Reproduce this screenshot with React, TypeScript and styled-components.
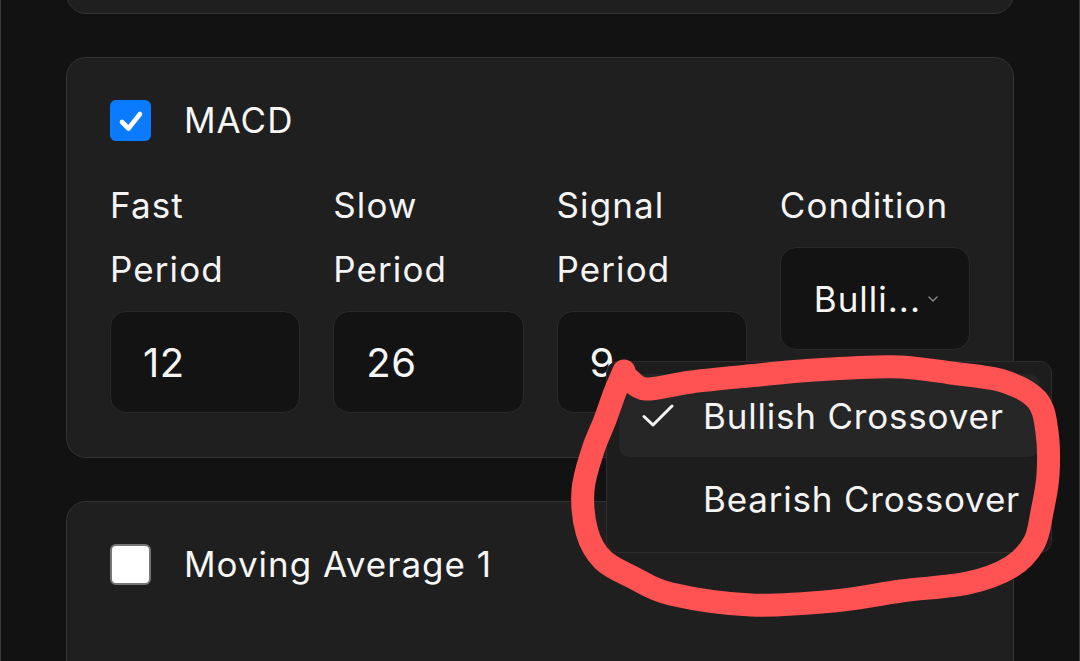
import React from "react";
import styled, { createGlobalStyle } from "styled-components";

const GlobalStyle = createGlobalStyle`
  html, body {
    margin: 0;
    padding: 0;
    background: #121212;
    font-family: Inter, "Noto Sans", sans-serif;
    color: #f4f4f4;
  }
  * { box-sizing: border-box; }
`;

const Frame = styled.div`
  position: relative;
  width: 1080px;
  height: 661px;
  overflow: hidden;
  background: #121212;
  border-left: 1px solid #3a3a3a;
  border-right: 1px solid #3a3a3a;
`;

const Stack = styled.div`
  display: flex;
  flex-direction: column;
  gap: 43px;
  padding: 0 65px;
  margin-top: -186px;
`;

const Card = styled.section<{ $height?: number }>`
  position: relative;
  background: #1f1f1f;
  border: 1px solid #333333;
  border-radius: 20px;
  padding: 42px 43px 44px 43px;
  ${(p) => (p.$height ? `height: ${p.$height}px;` : "")}
`;

const Header = styled.label`
  display: flex;
  align-items: center;
  gap: 33px;
`;

const Box = styled.span<{ $checked?: boolean }>`
  width: 41px;
  height: 41px;
  flex: none;
  border-radius: 6px;
  display: flex;
  align-items: center;
  justify-content: center;
  background: ${(p) => (p.$checked ? "#0a7bff" : "#ffffff")};
  border: ${(p) => (p.$checked ? "none" : "2px solid #767676")};
`;

const Title = styled.span`
  font-size: 35px;
  line-height: 41px;
  letter-spacing: 1px;
  color: #f6f6f6;
`;

const Grid = styled.div`
  display: grid;
  grid-template-columns: repeat(4, 1fr);
  gap: 33px;
  margin-top: 32px;
  align-items: start;
`;

const Field = styled.div`
  display: flex;
  flex-direction: column;
  gap: 10px;
  position: relative;
`;

const Label = styled.div`
  font-size: 35px;
  line-height: 64px;
  letter-spacing: 1.1px;
  color: #f4f4f4;
  width: 150px;
`;

const Input = styled.div`
  height: 102px;
  border-radius: 16px;
  background: #131313;
  border: 1px solid #2a2a2a;
  padding: 0 32px;
  display: flex;
  align-items: center;
  font-size: 40px;
  letter-spacing: 0.5px;
  color: #f6f6f6;
`;

const SelectWrap = styled.div`
  position: relative;
`;

const Select = styled.div`
  height: 103px;
  border-radius: 16px;
  background: #131313;
  border: 1px solid #2a2a2a;
  padding: 0 20px 0 33px;
  display: flex;
  align-items: center;
  gap: 7px;
  font-size: 35px;
  letter-spacing: 1px;
  color: #f6f6f6;
`;

const Menu = styled.div`
  position: absolute;
  top: calc(100% + 11px);
  right: -82px;
  width: 446px;
  padding: 12px;
  background: #1d1d1d;
  border: 1px solid #2e2e2e;
  border-radius: 12px;
  display: flex;
  flex-direction: column;
  z-index: 5;
`;

const Item = styled.div<{ $active?: boolean }>`
  height: 83px;
  display: flex;
  align-items: center;
  border-radius: 10px;
  background: ${(p) => (p.$active ? "#262626" : "transparent")};
  font-size: 35px;
  letter-spacing: 0.8px;
  color: #f4f4f4;
  white-space: nowrap;
`;

const CheckSlot = styled.span`
  width: 84px;
  flex: none;
  display: flex;
  align-items: center;
  padding-left: 23px;
`;

const Overlay = styled.svg`
  position: absolute;
  inset: 0;
  pointer-events: none;
  z-index: 10;
`;

type Pt = [number, number];

function smooth(pts: Pt[]): string {
  let d = `M ${pts[0][0]} ${pts[0][1]}`;
  for (let i = 0; i < pts.length - 1; i++) {
    const p0 = pts[i - 1] || pts[i];
    const p1 = pts[i];
    const p2 = pts[i + 1];
    const p3 = pts[i + 2] || p2;
    const c1x = p1[0] + (p2[0] - p0[0]) / 6;
    const c1y = p1[1] + (p2[1] - p0[1]) / 6;
    const c2x = p2[0] - (p3[0] - p1[0]) / 6;
    const c2y = p2[1] - (p3[1] - p1[1]) / 6;
    d += ` C ${c1x.toFixed(1)} ${c1y.toFixed(1)}, ${c2x.toFixed(1)} ${c2y.toFixed(1)}, ${p2[0]} ${p2[1]}`;
  }
  return d;
}

const loop: Pt[] = [
  [623, 371], [614, 392], [604, 420], [592, 450], [582, 490], [586, 532],
  [602, 560], [633, 578], [670, 594], [750, 605], [833, 601], [900, 591],
  [967, 583], [1010, 567], [1033, 543], [1041, 512], [1047, 475], [1046, 432],
  [1036, 400], [1002, 381], [950, 373], [900, 367], [850, 368], [800, 371],
  [747, 376], [690, 382], [645, 389], [628, 379],
];

const CheckMark = () => (
  <svg width="26" height="22" viewBox="0 0 26 22">
    <path d="M4 12 L10.5 18.5 L22 4" fill="none" stroke="#ffffff" strokeWidth="4.6" strokeLinecap="round" strokeLinejoin="round" />
  </svg>
);

const MenuCheck = () => (
  <svg width="32" height="24" viewBox="0 0 32 24">
    <path d="M2 12.5 L11 21 L30 2" fill="none" stroke="#f4f4f4" strokeWidth="3" strokeLinecap="round" strokeLinejoin="round" />
  </svg>
);

const Chevron = () => (
  <svg width="10" height="6" viewBox="0 0 10 6">
    <path d="M1 1 L5 5 L9 1" fill="none" stroke="#8a8a8a" strokeWidth="1.4" strokeLinecap="round" strokeLinejoin="round" />
  </svg>
);

const fields = [
  { label: "Fast Period", value: "12" },
  { label: "Slow Period", value: "26" },
  { label: "Signal Period", value: "9" },
];

export default function App() {
  return (
    <>
      <GlobalStyle />
      <Frame>
        <Stack>
          <Card $height={200} />
          <Card>
            <Header>
              <Box $checked>
                <CheckMark />
              </Box>
              <Title>MACD</Title>
            </Header>
            <Grid>
              {fields.map((f) => (
                <Field key={f.label}>
                  <Label>{f.label}</Label>
                  <Input>{f.value}</Input>
                </Field>
              ))}
              <Field>
                <Label>Condition</Label>
                <SelectWrap>
                  <Select>
                    <span>Bulli...</span>
                    <Chevron />
                  </Select>
                  <Menu>
                    <Item $active>
                      <CheckSlot>
                        <MenuCheck />
                      </CheckSlot>
                      Bullish Crossover
                    </Item>
                    <Item>
                      <CheckSlot />
                      Bearish Crossover
                    </Item>
                  </Menu>
                </SelectWrap>
              </Field>
            </Grid>
          </Card>
          <Card $height={200}>
            <Header>
              <Box />
              <Title>Moving Average 1</Title>
            </Header>
          </Card>
        </Stack>
        <Overlay width="1080" height="661" viewBox="0 0 1080 661">
          <path d={smooth(loop)} fill="none" stroke="#ff5252" strokeWidth="23" strokeLinecap="round" strokeLinejoin="round" />
        </Overlay>
      </Frame>
    </>
  );
}
